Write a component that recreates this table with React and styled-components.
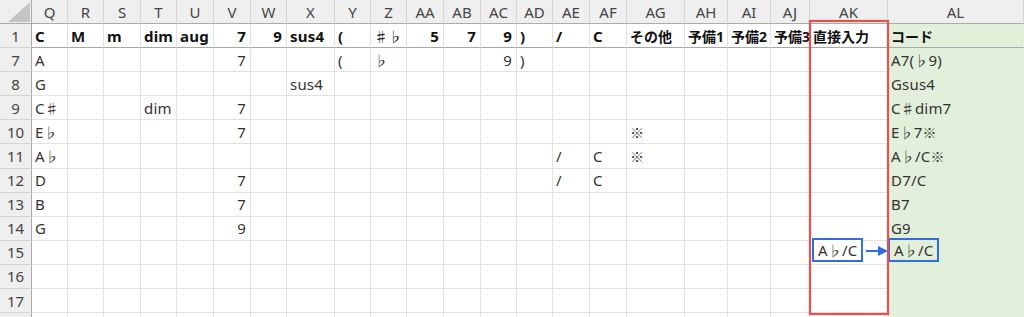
import React from "react";
import styled, { createGlobalStyle } from "styled-components";

const GlobalStyle = createGlobalStyle`
  body {
    margin: 0;
    background: #fff;
    overflow: hidden;
    font-family: "Noto Sans", "Noto Sans CJK JP", sans-serif;
  }
`;

const COLS = [
  ["Q", 36], ["R", 36], ["S", 37], ["T", 36], ["U", 37], ["V", 37], ["W", 36],
  ["X", 48], ["Y", 36], ["Z", 36], ["AA", 37], ["AB", 37], ["AC", 36], ["AD", 36],
  ["AE", 37], ["AF", 37], ["AG", 58], ["AH", 43], ["AI", 43], ["AJ", 39],
  ["AK", 78], ["AL", 136],
];

// row 18 only peeks in at the bottom edge, so its number is not shown
const ROWS = [
  {
    n: 1,
    head: true,
    cells: {
      Q: "C", R: "M", S: "m", T: "dim", U: "aug", V: "7", W: "9", X: "sus4",
      Y: "(", Z: "♯♭", AA: "5", AB: "7", AC: "9", AD: ")", AE: "/", AF: "C",
      AG: "その他", AH: "予備1", AI: "予備2", AJ: "予備3", AK: "直接入力", AL: "コード",
    },
  },
  { n: 7, cells: { Q: "A", V: "7", Y: "(", Z: "♭", AC: "9", AD: ")", AL: "A7(♭9)" } },
  { n: 8, cells: { Q: "G", X: "sus4", AL: "Gsus4" } },
  { n: 9, cells: { Q: "C♯", T: "dim", V: "7", AL: "C♯dim7" } },
  { n: 10, cells: { Q: "E♭", V: "7", AG: "※", AL: "E♭7※" } },
  { n: 11, cells: { Q: "A♭", AE: "/", AF: "C", AG: "※", AL: "A♭/C※" } },
  { n: 12, cells: { Q: "D", V: "7", AE: "/", AF: "C", AL: "D7/C" } },
  { n: 13, cells: { Q: "B", V: "7", AL: "B7" } },
  { n: 14, cells: { Q: "G", V: "9", AL: "G9" } },
  { n: 15, tagged: true, cells: { AK: "A♭/C", AL: "A♭/C" } },
  { n: 16, cells: {} },
  { n: 17, cells: {} },
  { n: 18, clipped: true, cells: {} },
];

const Sheet = styled.div`
  position: relative;
  display: grid;
  grid-template-columns: 32px ${COLS.map(([, w]) => `${w}px`).join(" ")};
  grid-template-rows: 24px repeat(${ROWS.length}, 24.1px);
  width: 1024px;
  height: 317px;
  overflow: hidden;
  font-size: 15px;
  color: #333;
`;

const Corner = styled.div`
  background: #efefef;
  border-right: 1px solid #ababab;
  border-bottom: 1px solid #ababab;
  box-sizing: border-box;
  display: flex;
  align-items: flex-end;
  justify-content: flex-end;
  padding: 0 1px 1px 0;
`;

const ColHead = styled.div`
  background: #efefef;
  border-right: 1px solid #d6d6d6;
  border-bottom: 1px solid #ababab;
  box-sizing: border-box;
  display: flex;
  align-items: center;
  justify-content: center;
  color: #444;
`;

const RowHead = styled.div`
  background: #efefef;
  border-right: 1px solid #ababab;
  border-bottom: 1px solid #d6d6d6;
  box-sizing: border-box;
  display: flex;
  align-items: center;
  justify-content: center;
  color: #444;
`;

const Cell = styled.div`
  box-sizing: border-box;
  display: flex;
  align-items: center;
  justify-content: ${(p) => (p.$right ? "flex-end" : "flex-start")};
  padding: 0 3px 0 3px;
  padding-right: ${(p) => (p.$right ? "4px" : "3px")};
  white-space: nowrap;
  background: ${(p) => (p.$green ? "#e2efda" : "#fff")};
  border-right: 1px solid ${(p) => (p.$green ? "transparent" : "#e2e2e2")};
  border-bottom: 1px solid
    ${(p) => (p.$heavy ? "#a8a8a8" : p.$green ? "transparent" : "#e2e2e2")};
  font-weight: ${(p) => (p.$bold ? 700 : 400)};
  color: ${(p) => (p.$bold ? "#111" : "#333")};
  font-size: ${(p) => (p.$cjk ? "14px" : "15px")};
  letter-spacing: ${(p) => (p.$cjk ? "0" : "0.2px")};
`;

const Sym = styled.span`
  font-family: "Noto Sans CJK JP", sans-serif;
  font-size: 14px;
  font-weight: 400;
`;

const Tag = styled.span`
  display: inline-flex;
  align-items: center;
  height: 24px;
  box-sizing: border-box;
  padding: 0 4px;
  margin-left: ${(p) => p.$shift}px;
  margin-bottom: 4px;
  border: 2px solid #2f6fe3;
  background: ${(p) => (p.$green ? "#e2efda" : "#fff")};
`;

const RedFrame = styled.div`
  position: absolute;
  left: 809px;
  top: 20px;
  width: 80px;
  height: 295px;
  box-sizing: border-box;
  border: 2px solid #e84f4f;
  box-shadow: 0 0 1px rgba(232, 79, 79, 0.7), inset 0 0 1px rgba(232, 79, 79, 0.7);
  pointer-events: none;
`;

const Arrow = styled.svg`
  position: absolute;
  left: 866px;
  top: 245px;
  pointer-events: none;
`;

const Text = ({ value }) =>
  value
    .split(/([♭♯※]+)/)
    .filter(Boolean)
    .map((part, i) =>
      /[♭♯※]/.test(part) ? <Sym key={i}>{part}</Sym> : <span key={i}>{part}</span>,
    );

const hasCjk = (s) => /[\u3040-\u30ff\u4e00-\u9fff]/.test(s);

export default function App() {
  return (
    <>
      <GlobalStyle />
      <Sheet>
        <Corner>
          <svg width="22" height="20" viewBox="0 0 22 20">
            <polygon points="22,0 22,20 0,20" fill="#c4c4c4" />
          </svg>
        </Corner>
        {COLS.map(([name]) => (
          <ColHead key={name}>{name}</ColHead>
        ))}
        {ROWS.map((row) => (
          <React.Fragment key={row.n}>
            <RowHead>{row.clipped ? null : row.n}</RowHead>
            {COLS.map(([name]) => {
              const v = row.cells[name];
              const green = name === "AL";
              return (
                <Cell
                  key={name}
                  $green={green}
                  $heavy={row.head}
                  $bold={row.head}
                  $cjk={v && hasCjk(v)}
                  $right={v && /^\d+$/.test(v)}
                >
                  {v && row.tagged ? (
                    <Tag $shift={green ? -3 : -1} $green={green}>
                      <Text value={v} />
                    </Tag>
                  ) : v ? (
                    <Text value={v} />
                  ) : null}
                </Cell>
              );
            })}
          </React.Fragment>
        ))}
        <RedFrame />
        <Arrow width="22" height="12" viewBox="0 0 22 12">
          <line x1="0" y1="6" x2="14" y2="6" stroke="#2f6fe3" strokeWidth="2" />
          <polygon points="12,1 22,6 12,11" fill="#2f6fe3" />
        </Arrow>
      </Sheet>
    </>
  );
}
